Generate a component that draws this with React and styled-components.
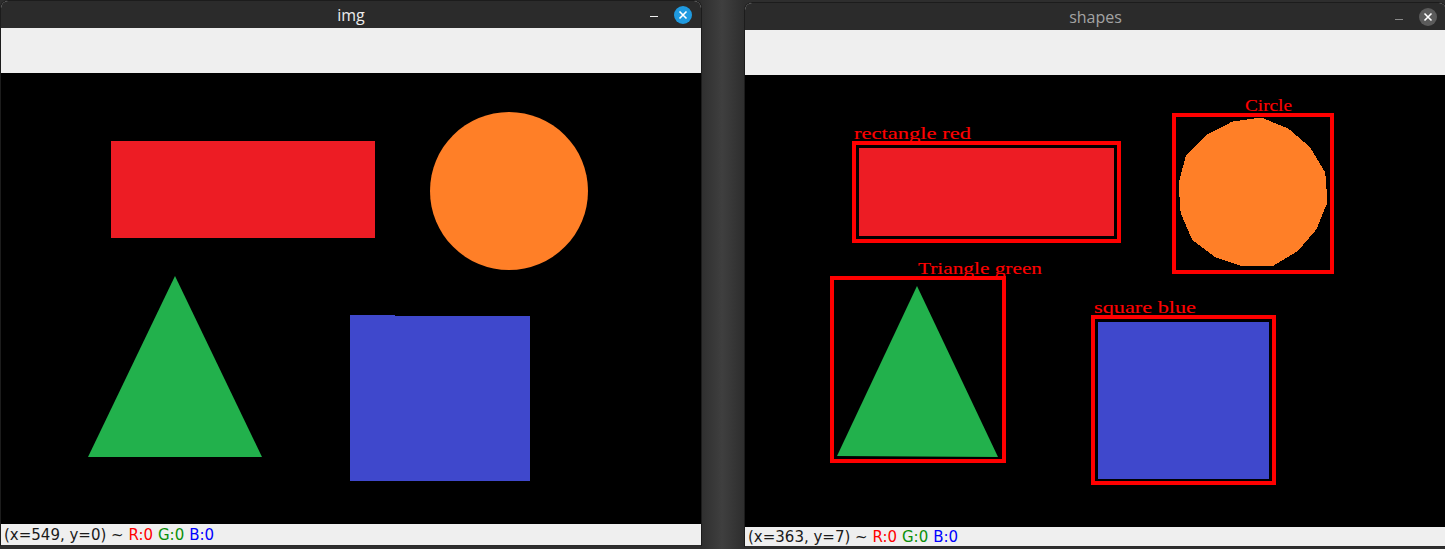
import React from "react";
import styled, { createGlobalStyle } from "styled-components";

const GlobalStyle = createGlobalStyle`
  html, body {
    margin: 0;
    padding: 0;
    background: #333333;
    overflow: hidden;
  }
`;

// polygon that opencv's approxPolyDP leaves from the circle contour
const circlePoints = (cx, cy, r, n) => {
  const pts = [];
  for (let i = 0; i < n; i++) {
    const a = (i / n) * Math.PI * 2 + 0.12;
    const rr = r + (i % 3 === 0 ? 1 : -1);
    pts.push(`${(cx + Math.cos(a) * rr).toFixed(1)},${(cy + Math.sin(a) * rr).toFixed(1)}`);
  }
  return pts.join(" ");
};

const windows = [
  {
    id: "img",
    title: "img",
    active: true,
    width: 702,
    top: 0,
    canvasHeight: 451,
    statusHeight: 21,
    coords: "(x=549, y=0) ~ ",
  },
  {
    id: "shapes",
    title: "shapes",
    active: false,
    width: 703,
    top: 2,
    canvasHeight: 452,
    statusHeight: 19,
    coords: "(x=363, y=7) ~ ",
  },
];

function ImgCanvas() {
  return (
    <svg width="100%" height="100%" shapeRendering="crispEdges">
      <g transform="translate(-1 0)">
        <rect x="111" y="68" width="264" height="97" fill="#ed1c24" />
        <circle cx="509" cy="118" r="79" fill="#ff7f27" shapeRendering="auto" />
        <polygon points="175,203 88,384 262,384" fill="#22b14c" shapeRendering="auto" />
        <rect x="350" y="242" width="45" height="2" fill="#3f48cc" />
        <rect x="350" y="243" width="180" height="165" fill="#3f48cc" />
      </g>
    </svg>
  );
}

function ShapesCanvas() {
  return (
    <svg width="100%" height="100%" shapeRendering="crispEdges">
      <g transform="translate(-2 0)">
        <rect x="111" y="68" width="265" height="98" fill="none" stroke="#ff0000" strokeWidth="4" />
        <rect x="115" y="72" width="257" height="90" fill="#ed1c24" stroke="#000" strokeWidth="2" />
        <Label x="111" y="64" textLength="117">rectangle red</Label>

        <rect x="431" y="40" width="158" height="157" fill="none" stroke="#ff0000" strokeWidth="4" />
        <polygon points={circlePoints(509, 118, 75, 16)} fill="#ff7f27" />
        <Label x="502" y="36" textLength="47">Circle</Label>

        <rect x="89" y="203" width="172" height="183" fill="none" stroke="#ff0000" strokeWidth="4" />
        <polygon points="174,211 94,381 255,382" fill="#22b14c" shapeRendering="auto" />
        <Label x="175" y="199" textLength="124">Triangle green</Label>

        <rect x="350" y="242" width="181" height="166" fill="none" stroke="#ff0000" strokeWidth="4" />
        <rect x="354" y="246" width="173" height="159" fill="#3f48cc" stroke="#000" strokeWidth="2" />
        <Label x="351" y="238" textLength="102">square blue</Label>
      </g>
    </svg>
  );
}

export default function App() {
  return (
    <>
      <GlobalStyle />
      <Desktop>
        {windows.map((w) => (
          <Window key={w.id} $width={w.width} $top={w.top}>
            <TitleBar>
              <span />
              <Title $active={w.active}>{w.title}</Title>
              <Controls>
                <Minimize $active={w.active} />
                <CloseButton $active={w.active}>
                  <svg width="10" height="10" viewBox="0 0 10 10">
                    <path d="M1.5 1.5 L8.5 8.5 M8.5 1.5 L1.5 8.5" stroke="#fff" strokeWidth="1.6" />
                  </svg>
                </CloseButton>
              </Controls>
            </TitleBar>
            <Toolbar />
            <Canvas $height={w.canvasHeight}>
              {w.id === "img" ? <ImgCanvas /> : <ShapesCanvas />}
            </Canvas>
            <StatusBar $height={w.statusHeight}>
              <span>{w.coords}</span>
              <Channel $color="#ff0000">R:0</Channel>
              <Channel $color="#0a8f0a">G:0</Channel>
              <Channel $color="#0000ff">B:0</Channel>
            </StatusBar>
          </Window>
        ))}
      </Desktop>
    </>
  );
}

const Desktop = styled.div`
  display: flex;
  align-items: flex-start;
  gap: 42px;
  width: 1445px;
  height: 549px;
  overflow: hidden;
  background: linear-gradient(
    90deg,
    #2e2e2e 0px,
    #2e2e2e 700px,
    #3f3f3f 722px,
    #2e2e2e 744px,
    #2e2e2e 100%
  );
`;

const Window = styled.div`
  flex: 0 0 auto;
  width: ${(p) => p.$width}px;
  margin-top: ${(p) => p.$top}px;
  display: flex;
  flex-direction: column;
  box-sizing: border-box;
  border: 1px solid #1c1c1c;
  border-bottom: none;
  border-radius: 8px 8px 0 0;
  overflow: hidden;
  background: #efefef;
`;

const TitleBar = styled.div`
  height: 27px;
  display: grid;
  grid-template-columns: 1fr auto 1fr;
  align-items: center;
  background: #2b2b2b;
  font-family: "Open Sans", "Noto Sans", sans-serif;
`;

const Title = styled.span`
  font-size: 16px;
  font-weight: 500;
  color: ${(p) => (p.$active ? "#ececec" : "#a3a3a3")};
`;

const Controls = styled.div`
  justify-self: end;
  display: flex;
  align-items: center;
  gap: 16px;
  padding-right: 9px;
`;

const Minimize = styled.span`
  width: 8px;
  height: 1px;
  margin-top: ${(p) => (p.$active ? "3px" : "5px")};
  background: ${(p) => (p.$active ? "#f0f0f0" : "#8a8a8a")};
`;

const CloseButton = styled.span`
  width: 18px;
  height: 18px;
  border-radius: 50%;
  display: flex;
  align-items: center;
  justify-content: center;
  background: ${(p) => (p.$active ? "#1f9ae0" : "#5b5b5b")};
`;

const Toolbar = styled.div`
  height: 45px;
  background: #efefef;
`;

const Canvas = styled.div`
  height: ${(p) => p.$height}px;
  background: #000000;
  svg {
    display: block;
  }
`;

const StatusBar = styled.div`
  height: ${(p) => p.$height}px;
  display: flex;
  align-items: center;
  padding-left: 3px;
  background: #efefef;
  font-family: "DejaVu Sans", sans-serif;
  font-size: 15px;
  color: #1a1a1a;
  white-space: pre;
  border-bottom: 1px solid #2a2a2a;
`;

const Channel = styled.span`
  color: ${(p) => p.$color};
  margin-right: 5px;
`;

const Label = styled.text.attrs({ lengthAdjust: "spacingAndGlyphs" })`
  font-family: "Liberation Serif", serif;
  font-size: 17px;
  fill: #ff0000;
  stroke: #ff0000;
  stroke-width: 0.12px;
`;
